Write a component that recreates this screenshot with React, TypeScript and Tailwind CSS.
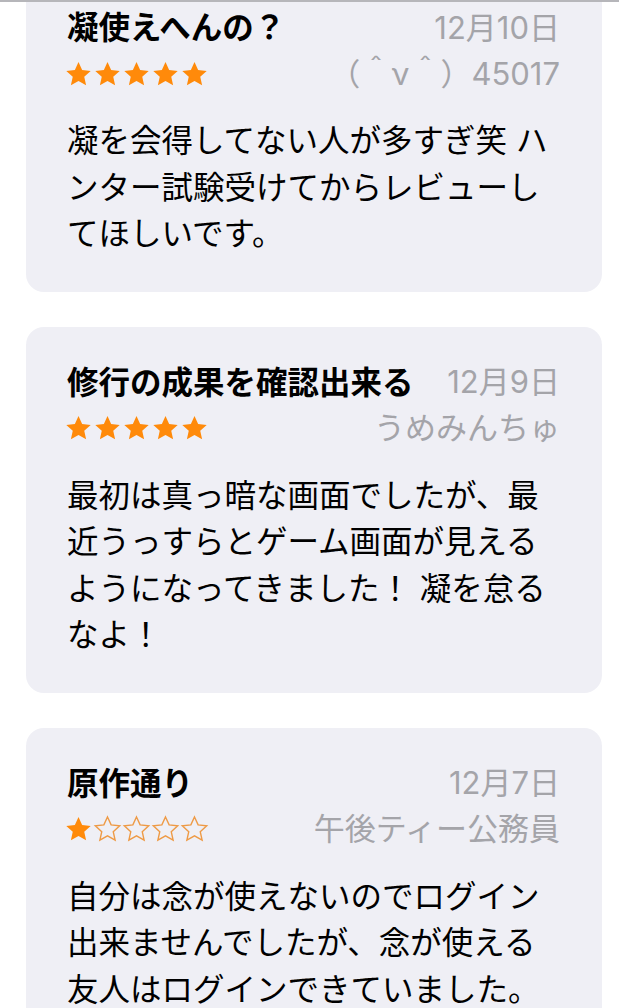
import React from 'react'

type Review = {
  title: string
  date: string
  author: string
  rating: number
  lines: string[]
}

const reviews: Review[] = [
  {
    title: '凝使えへんの？',
    date: '12月10日',
    author: '（＾ν＾）45017',
    rating: 5,
    lines: ['凝を会得してない人が多すぎ笑 ハ', 'ンター試験受けてからレビューし', 'てほしいです。'],
  },
  {
    title: '修行の成果を確認出来る',
    date: '12月9日',
    author: 'うめみんちゅ',
    rating: 5,
    lines: ['最初は真っ暗な画面でしたが、最', '近うっすらとゲーム画面が見える', 'ようになってきました！ 凝を怠る', 'なよ！'],
  },
  {
    title: '原作通り',
    date: '12月7日',
    author: '午後ティー公務員',
    rating: 1,
    lines: ['自分は念が使えないのでログイン', '出来ませんでしたが、念が使える', '友人はログインできていました。'],
  },
]

function Star({ filled }: { filled: boolean }) {
  return (
    <svg width="29" height="29" viewBox="0 0 24 24">
      <path
        d="M12 1.6l3 6.6 7.1.8-5.35 4.8 1.55 7L12 17.3l-6.3 3.5 1.55-7L1.9 9l7.1-.8z"
        fill={filled ? '#ff8a0a' : 'none'}
        stroke={filled ? 'none' : '#ee9a45'}
        strokeWidth={filled ? 0 : 1.15}
        strokeLinejoin="miter"
      />
    </svg>
  )
}

function ReviewCard({ r }: { r: Review }) {
  return (
    <div className="ml-[26px] mr-[17px] rounded-[18px] bg-[#efeff5] pl-[41px] pr-[42px] pt-[36px] pb-[34px]">
      <div className="flex h-[40px] items-center justify-between whitespace-nowrap">
        <span className="text-[31.5px] font-bold text-black">{r.title}</span>
        <span className="text-[31px] text-[#a4a4a9]">{r.date}</span>
      </div>
      <div className="mt-[6px] flex h-[40px] items-center justify-between whitespace-nowrap">
        <div className="-ml-[3px] flex">
          {[0, 1, 2, 3, 4].map(i => (
            <Star key={i} filled={i < r.rating} />
          ))}
        </div>
        <span className="text-[31px] text-[#a4a4a9]">{r.author}</span>
      </div>
      <div className="mt-[24px] text-[31.5px] leading-[46.5px] text-black">
        {r.lines.map((l, i) => (
          <div key={i} className="whitespace-nowrap">{l}</div>
        ))}
      </div>
    </div>
  )
}

export default function App() {
  return (
    <div
      className="h-[1008px] w-[619px] overflow-hidden bg-white"
      style={{ fontFamily: 'Inter, "Noto Sans CJK JP", sans-serif' }}
    >
      <div className="relative z-10 h-[2px] bg-[#b6b6ba]" />
      <div className="-mt-[30px] flex flex-col gap-[35px]">
        {reviews.map((r, i) => (
          <ReviewCard key={i} r={r} />
        ))}
      </div>
    </div>
  )
}
